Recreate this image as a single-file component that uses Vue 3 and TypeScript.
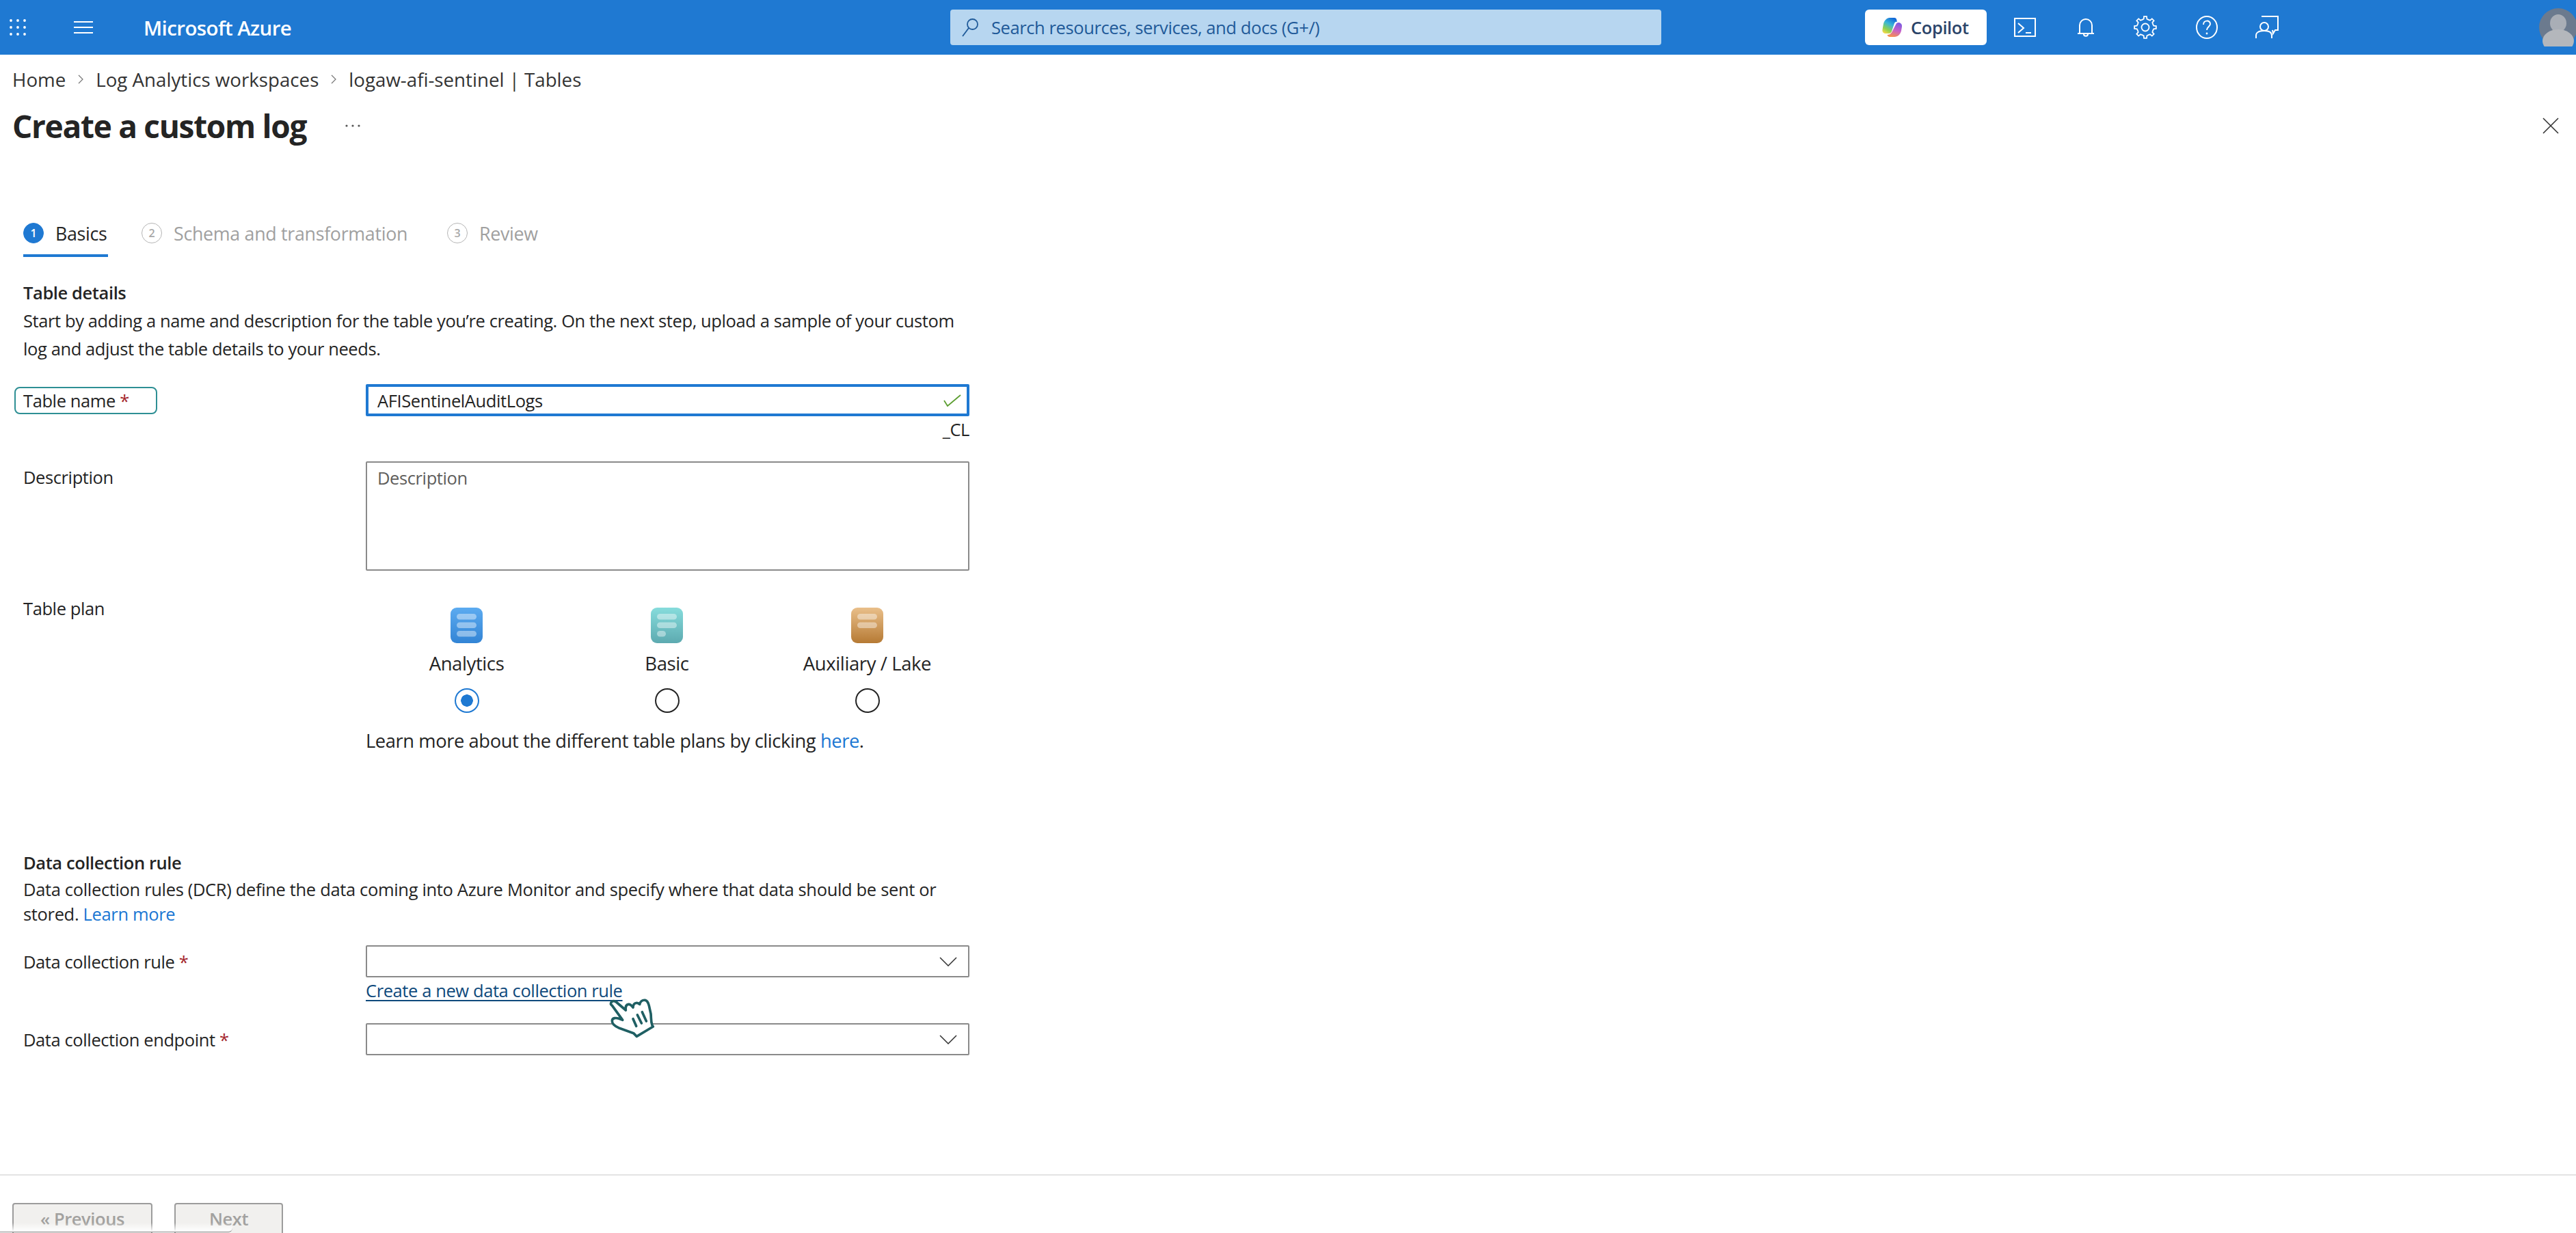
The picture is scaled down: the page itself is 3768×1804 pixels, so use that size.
<template>
  <div class="page">
    <header class="topbar">
      <svg class="waffle" width="24" height="24" viewBox="0 0 24 24">
        <template v-for="row in [2, 12, 22]" :key="row">
          <circle v-for="col in [2, 12, 22]" :key="col" :cx="col" :cy="row" r="1.9" fill="#fff" />
        </template>
      </svg>
      <svg class="burger" width="28" height="18" viewBox="0 0 28 18">
        <path d="M0 1h28M0 9h28M0 17h28" stroke="#fff" stroke-width="2" />
      </svg>
      <div class="brand">Microsoft Azure</div>
      <div class="search">
        <svg width="26" height="28" viewBox="0 0 26 28" fill="none" stroke="#1f5a99" stroke-width="1.8">
          <circle cx="16.5" cy="9.5" r="7.5" />
          <path d="M11 15 2 27" />
        </svg>
        <span>Search resources, services, and docs (G+/)</span>
      </div>
      <div class="copilot">
        <svg width="30" height="30" viewBox="0 0 30 30">
          <defs>
            <linearGradient id="cpA" x1="0.7" y1="0" x2="0.2" y2="1">
              <stop offset="0" stop-color="#1267d8" />
              <stop offset="0.4" stop-color="#38b6d8" />
              <stop offset="0.75" stop-color="#8fd14f" />
              <stop offset="1" stop-color="#f6d84a" />
            </linearGradient>
            <linearGradient id="cpB" x1="0.6" y1="0" x2="0.3" y2="1">
              <stop offset="0" stop-color="#7d5ce0" />
              <stop offset="0.5" stop-color="#c85fc8" />
              <stop offset="1" stop-color="#f7924a" />
            </linearGradient>
          </defs>
          <path d="M11 1h7c1.500 0 2.500.7 3 2l1 4c-1.500-.5-3 0-4 2l-4 12c-.7 2-2 3-4 3H5c-3 0-5-2.500-4.500-5.500L2 10C3 5 7 1 11 1Z" fill="url(#cpA)" />
          <path d="M24 8c3 0 5.500 2.500 5 6l-1 6c-1 5-5 9-10 9h-7c-1.500 0-3-1-3.500-3 2.500 0 5-1 6.500-3.500L20 11c.8-2 2-3 4-3Z" fill="url(#cpB)" />
        </svg>
        <span>Copilot</span>
      </div>
      <div class="tools">
        <svg width="32" height="28" viewBox="0 0 32 28" fill="none" stroke="#fff" stroke-width="2">
          <rect x="1" y="1" width="30" height="26" />
          <path d="m6 8 8 7-8 7M17 22h8" />
        </svg>
        <svg width="26" height="28" viewBox="0 0 26 28" fill="none" stroke="#fff" stroke-width="2">
          <path d="M4 23V11a9 9 0 0 1 18 0v12M1 23h24M10 24c0 3.500 6 3.500 6 0" />
        </svg>
        <svg width="34" height="34" viewBox="0 0 34 34" fill="none" stroke="#fff" stroke-width="1.800">
          <path :d="gearPath" />
          <circle cx="17" cy="17" r="5.500" />
        </svg>
        <svg width="32" height="34" viewBox="0 0 32 34" fill="none" stroke="#fff" stroke-width="2">
          <ellipse cx="16" cy="17" rx="15" ry="16" />
          <path d="M11 13c0-7 10-7 10-1 0 4-5 4-5 9" />
          <circle cx="16" cy="26" r="1.400" fill="#fff" stroke="none" />
        </svg>
        <svg width="34" height="34" viewBox="0 0 34 34" fill="none" stroke="#fff" stroke-width="2">
          <path d="M9 1h24v20h-4l-3 5-1-5" />
          <circle cx="13" cy="16" r="6" />
          <path d="M1 33v-4c0-5 5-7 12-7s11 2 11 7v4" />
        </svg>
      </div>
      <svg class="avatar" width="56" height="56" viewBox="0 0 56 56">
        <circle cx="28" cy="28" r="28" fill="#6b7a8e" />
        <ellipse cx="28" cy="22" rx="12" ry="13" fill="#a9aeb6" />
        <ellipse cx="28" cy="48" rx="23" ry="17" fill="#b4b7bc" />
      </svg>
    </header>

    <nav class="crumbs">
      <template v-for="(crumb, i) in crumbs" :key="crumb">
        <span>{{ crumb }}</span>
        <svg v-if="i < crumbs.length - 1" width="8" height="14" viewBox="0 0 8 14" fill="none" stroke="#777" stroke-width="1.200">
          <path d="m1 1 6 6-6 6" />
        </svg>
      </template>
    </nav>

    <div class="titlebar">
      <h1>Create a custom log</h1>
      <svg class="more" width="22" height="4" viewBox="0 0 22 4">
        <circle cx="2" cy="2" r="1.600" fill="#555" />
        <circle cx="11" cy="2" r="1.600" fill="#555" />
        <circle cx="20" cy="2" r="1.600" fill="#555" />
      </svg>
      <svg class="close" width="24" height="24" viewBox="0 0 24 24" stroke="#333" stroke-width="1.600">
        <path d="m1 1 22 22M23 1 1 23" />
      </svg>
    </div>

    <div class="tabs">
      <div v-for="(tab, i) in tabs" :key="tab" class="tab" :class="{ active: i === 0 }">
        <span class="num">{{ i + 1 }}</span>
        <span>{{ tab }}</span>
      </div>
    </div>

    <section class="form">
      <h2 class="head-one">Table details</h2>
      <p class="intro">Start by adding a name and description for the table you’re creating. On the next step, upload a sample of your custom<br />log and adjust the table details to your needs.</p>

      <div class="row name-row">
        <label class="name-label">Table name <i>*</i></label>
        <div class="name-input">
          <input value="AFISentinelAuditLogs" />
          <svg width="26" height="18" viewBox="0 0 26 18" fill="none" stroke="#5c9e31" stroke-width="1.800">
            <path d="m1 9 5 8L25 1" />
          </svg>
        </div>
      </div>
      <div class="suffix">_CL</div>

      <div class="row desc-row">
        <label class="plain">Description</label>
        <textarea placeholder="Description"></textarea>
      </div>

      <div class="row plan-row">
        <label class="plain">Table plan</label>
        <div>
          <div class="plans">
            <div v-for="(plan, i) in plans" :key="plan.name" class="plan">
              <svg width="47" height="52" viewBox="0 0 47 52">
                <defs>
                  <linearGradient :id="`plan${i}`" x1="0" y1="0" x2="0" y2="1">
                    <stop offset="0" :stop-color="plan.from" />
                    <stop offset="1" :stop-color="plan.to" />
                  </linearGradient>
                </defs>
                <rect width="47" height="52" rx="9" :fill="`url(#plan${i})`" />
                <rect v-for="(w, b) in plan.bars" :key="b" x="9" :y="9 + b * 12.500" :width="w" height="8.500" rx="4.250" fill="#fff" fill-opacity="0.42" />
              </svg>
              <span class="plan-name">{{ plan.name }}</span>
              <span class="radio" :class="{ on: i === 0 }"></span>
            </div>
          </div>
          <p class="plan-note">Learn more about the different table plans by clicking <a class="lnk">here</a>.</p>
        </div>
      </div>

      <h2 class="head-two">Data collection rule</h2>
      <p class="intro-two">Data collection rules (DCR) define the data coming into Azure Monitor and specify where that data should be sent or<br />stored. <a class="lnk">Learn more</a></p>

      <div class="row rule-row">
        <label class="plain">Data collection rule <i>*</i></label>
        <div class="select">
          <svg width="26" height="14" viewBox="0 0 26 14" fill="none" stroke="#333" stroke-width="1.500"><path d="m1 1 12 12L25 1" /></svg>
        </div>
      </div>
      <a class="create-link">Create a new data collection rule</a>
      <div class="row endpoint-row">
        <label class="plain">Data collection endpoint <i>*</i></label>
        <div class="select">
          <svg width="26" height="14" viewBox="0 0 26 14" fill="none" stroke="#333" stroke-width="1.500"><path d="m1 1 12 12L25 1" /></svg>
        </div>
      </div>
    </section>

    <footer class="actions">
      <button class="prev">« Previous</button>
      <button class="next">Next</button>
    </footer>
    <div class="dock-edge"></div>

    <svg class="hand" width="140" height="110" viewBox="0 0 420 330" fill="none" stroke="#1f5f63" stroke-width="11" stroke-linejoin="round" stroke-linecap="round">
      <path fill="#fff" d="M160 146c2-12 14-16 24-8l42 36c-2-14 0-24 12-26 9-1 14 6 20 14 0-12 6-20 16-20 6 0 9 3 13 6 2-12 12-20 24-18 10 2 14 12 17 24l8 36c2 24 0 34 6 50l4 6-72 43-14-14-62-22c-14-6-34-18-32-34 2-12 18-12 30-8l16 6-45-62c-4-4-8-6-7-9Z" />
      <path d="m258 212 14 32M277 195l18 36M298 182l18 40" />
    </svg>
  </div>
</template>

<script setup lang="ts">
const crumbs = ['Home', 'Log Analytics workspaces', 'logaw-afi-sentinel | Tables']
const tabs = ['Basics', 'Schema and transformation', 'Review']

const plans = [
  { name: 'Analytics', from: '#5cabf0', to: '#3284d5', bars: [29, 29, 29] },
  { name: 'Basic', from: '#86dcdc', to: '#5daab0', bars: [29, 29, 13] },
  { name: 'Auxiliary / Lake', from: '#e9bf8a', to: '#b67a34', bars: [29, 29] }
]

// 8 tooth outline, good enough at this size
const gearPath = (() => {
  const pts: string[] = []
  const teeth = 8
  for (let i = 0; i < teeth; i++) {
    const a = (i / teeth) * Math.PI * 2
    const step = (Math.PI * 2) / teeth
    const at = (r: number, t: number) =>
      `${(17 + r * Math.sin(t)).toFixed(2)} ${(17 - r * Math.cos(t)).toFixed(2)}`
    pts.push(at(12, a - step * 0.5), at(12.5, a - step * 0.24), at(16, a - step * 0.16), at(16, a + step * 0.16), at(12.5, a + step * 0.24))
  }
  return `M${pts.join('L')}Z`
})()
</script>

<style>
html,
body {
  margin: 0;
  background: #fff;
}
</style>

<style scoped>
.page {
  position: relative;
  display: flex;
  flex-direction: column;
  width: 3768px;
  height: 1804px;
  overflow: hidden;
  background: #fff;
  color: #242424;
  font-family: "Open Sans", "Liberation Sans", sans-serif;
  font-size: 25.5px;
  letter-spacing: -0.4px;
}

.topbar {
  display: flex;
  align-items: center;
  flex: none;
  height: 80px;
  padding-left: 14px;
  background: #1f79d2;
  color: #fff;
}

.topbar > * {
  flex: none;
}

.burger {
  margin-left: 70px;
}

.brand {
  margin-left: 74px;
  width: 218px;
  font-size: 29.5px;
  font-weight: 600;
  white-space: nowrap;
  letter-spacing: -0.6px;
}

.search {
  display: flex;
  align-items: center;
  gap: 18px;
  width: 1040px;
  height: 52px;
  margin-left: 962px;
  padding-left: 16px;
  box-sizing: border-box;
  border-radius: 4px;
  background: #b7d6f0;
  color: #1f5a99;
}

.copilot {
  display: flex;
  align-items: center;
  gap: 12px;
  width: 178px;
  height: 52px;
  margin-left: 298px;
  padding-left: 25px;
  box-sizing: border-box;
  border-radius: 6px;
  background: #fff;
  color: #2b4469;
  font-weight: 600;
}

.tools {
  display: flex;
  align-items: center;
  gap: 57px;
  margin-left: 40px;
}

.tools svg:nth-child(2) {
  margin-left: 3px;
}

.tools svg:nth-child(5) {
  margin-left: -2px;
}

.avatar {
  margin-left: 381px;
}

.crumbs {
  display: flex;
  align-items: center;
  flex: none;
  gap: 18px;
  height: 72px;
  padding-left: 18px;
  font-size: 27.7px;
  letter-spacing: 0;
  color: #333;
}

.titlebar {
  display: flex;
  align-items: center;
  flex: none;
  height: 64px;
  padding-left: 18px;
}

.titlebar h1 {
  margin: 0;
  width: 487px;
  font-size: 46px;
  font-weight: 700;
  letter-spacing: -1.3px;
  white-space: nowrap;
}

.close {
  margin-left: auto;
  margin-right: 25px;
}

.tabs {
  display: grid;
  grid-template-columns: 124px 387px 134px;
  column-gap: 49px;
  flex: none;
  height: 60px;
  margin-top: 100px;
  margin-left: 34px;
  font-size: 26.8px;
  letter-spacing: -0.3px;
  color: #a0a0a0;
}

.tab {
  display: flex;
  align-items: flex-start;
  gap: 17px;
  box-sizing: border-box;
  line-height: 52px;
  white-space: nowrap;
}

.tab:last-child {
  margin-left: 11px;
}

.tab.active {
  border-bottom: 4px solid #1f79d2;
  color: #242424;
  font-weight: 500;
}

.num {
  display: flex;
  align-items: center;
  justify-content: center;
  flex: none;
  width: 30px;
  height: 30px;
  box-sizing: border-box;
  border: 1.500px solid #b5b5b5;
  border-radius: 50%;
  margin-top: 10px;
  font-size: 16px;
  line-height: 1;
  font-weight: 600;
  color: #a8a8a8;
}

.active .num {
  border-color: #1f79d2;
  background: #1f79d2;
  color: #fff;
}

.form {
  display: flex;
  flex-direction: column;
  padding-left: 34px;
  width: 1384px;
}

.form h2 {
  margin: 0;
  font-size: 25.5px;
  line-height: 36px;
  font-weight: 600;
}

.head-one {
  margin-top: 34px !important;
}

.intro {
  margin: 3px 0 0;
  line-height: 41px;
  white-space: nowrap;
}

.row {
  display: grid;
  grid-template-columns: 501px 883px;
}

.plain {
  line-height: 36px;
}

i {
  color: #a4262c;
  font-style: normal;
}

.name-row {
  margin-top: 31px;
  height: 47px;
}

.name-label {
  display: block;
  width: 209px;
  height: 40px;
  margin: 4px 0 0 -13px;
  padding-left: 11px;
  box-sizing: border-box;
  border: 2px solid #2e8f94;
  border-radius: 8px;
  line-height: 36px;
}

.name-input {
  position: relative;
  display: flex;
  align-items: center;
  height: 47px;
  box-sizing: border-box;
  border: 4px solid #1f79d2;
  border-radius: 2px;
}

.name-input input {
  flex: 1;
  height: 100%;
  padding: 0 13px;
  border: 0;
  outline: 0;
  font: inherit;
  letter-spacing: inherit;
  color: inherit;
}

.name-input svg {
  flex: none;
  margin-right: 8px;
}

.suffix {
  height: 44px;
  margin-top: -3px;
  line-height: 44px;
  text-align: right;
}

.desc-row {
  margin-top: 25px;
}

.desc-row .plain {
  padding-top: 5px;
}

textarea {
  display: block;
  width: 100%;
  height: 160px;
  padding: 4px 15px;
  box-sizing: border-box;
  border: 2px solid #8a8a8a;
  border-radius: 2px;
  outline: 0;
  resize: none;
  font: inherit;
  letter-spacing: inherit;
  line-height: 36px;
}

textarea::placeholder {
  color: #605e5c;
  opacity: 1;
}

.plan-row {
  margin-top: 37px;
}

.plans {
  display: grid;
  grid-template-columns: repeat(3, 293px);
  margin: 17px 0 0 1px;
}

.plan {
  display: flex;
  flex-direction: column;
  align-items: center;
}

.plan-name {
  margin-top: 12px;
  font-size: 27.5px;
  line-height: 36px;
}

.radio {
  width: 36px;
  height: 36px;
  margin-top: 18px;
  box-sizing: border-box;
  border: 2px solid #242424;
  border-radius: 50%;
}

.radio.on {
  border-color: #1f79d2;
  background: radial-gradient(circle, #1f79d2 0 8.500px, #fff 9px);
}

.plan-note {
  margin: 23px 0 0;
  font-size: 27.3px;
  line-height: 36px;
  white-space: nowrap;
}

.lnk {
  color: #1b77d3;
}

.head-two {
  margin-top: 142px !important;
}

.intro-two {
  margin: 3px 0 0;
  line-height: 36px;
  letter-spacing: -0.34px;
  white-space: nowrap;
}

.select {
  display: flex;
  align-items: center;
  justify-content: flex-end;
  height: 47px;
  padding-right: 16px;
  box-sizing: border-box;
  border: 2px solid #8a8a8a;
  border-radius: 2px;
}

.rule-row {
  margin-top: 28px;
}

.rule-row .plain,
.endpoint-row .plain {
  padding-top: 6px;
}

.create-link {
  margin: 1px 0 0 501px;
  line-height: 36px;
  color: #0f4a7c;
  text-decoration: underline;
  text-underline-offset: 4px;
  white-space: nowrap;
}

.endpoint-row {
  margin-top: 30px;
}

.actions {
  display: flex;
  align-items: flex-start;
  gap: 32px;
  flex: none;
  box-sizing: border-box;
  height: 86px;
  margin-top: auto;
  padding: 40px 0 0 18px;
  border-top: 2px solid #e3e3e3;
}

.actions button {
  flex: none;
  height: 60px;
  box-sizing: border-box;
  padding: 0 0 14px;
  border: 2px solid #9c9c9c;
  border-radius: 4px;
  background: #f1f0ee;
  color: #a2a19f;
  font: inherit;
  font-weight: 600;
  letter-spacing: inherit;
}

.prev {
  width: 205px;
}

.next {
  width: 159px;
}

.dock-edge {
  position: absolute;
  left: 0;
  bottom: 1px;
  width: 340px;
  height: 14px;
  box-sizing: border-box;
  border-bottom: 1px solid #8a8a8a;
  border-radius: 0 0 6px 0;
  background: linear-gradient(to bottom, rgba(255, 255, 255, 0), #fff);
}

.hand {
  position: absolute;
  left: 840px;
  top: 1420px;
}
</style>
